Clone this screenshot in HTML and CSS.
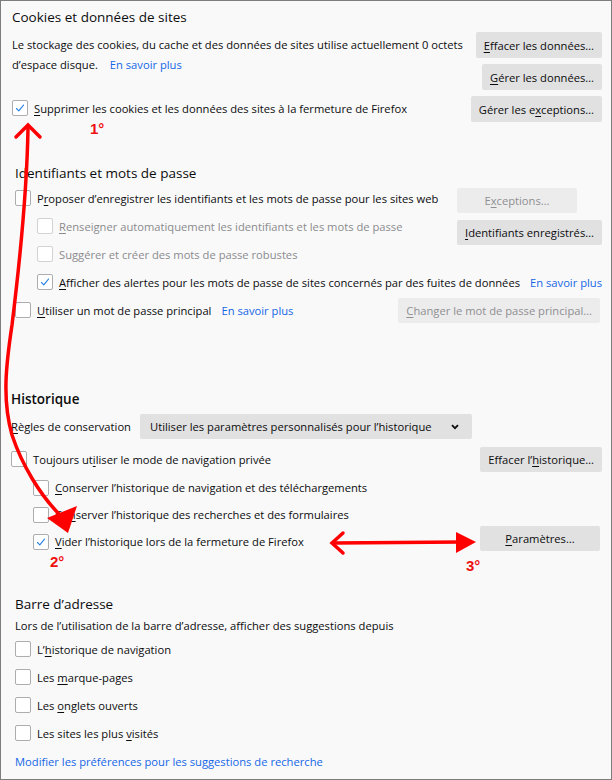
FILE: index.html
```html
<!DOCTYPE html>
<html lang="fr">
<head>
<meta charset="utf-8">
<title>Vie privée et sécurité</title>
<link rel="stylesheet" href="styles.css">
</head>
<body>
<div class="frame">

  <section class="sec sec-cookies">
    <h2 class="h">Cookies et données de sites</h2>
    <div class="cookie-body">
      <div class="cookie-left">
        <p class="desc">Le stockage des cookies, du cache et des données de sites utilise actuellement 0 octets<br>d’espace disque. <a class="link link-inline">En savoir plus</a></p>
        <div class="row cookie-check">
          <span class="cb checked"><svg viewBox="0 0 16 16"><path d="M4 8.6 L6.6 11.2 L12 4.6"/></svg></span>
          <span><u>S</u>upprimer les cookies et les données des sites à la fermeture de Firefox</span>
        </div>
      </div>
      <div class="btn-col end">
        <button class="btn"><u>E</u>ffacer les données…</button>
        <button class="btn"><u>G</u>érer les données…</button>
        <button class="btn">Gérer les e<u>x</u>ceptions…</button>
      </div>
    </div>
  </section>

  <section class="sec sec-logins">
    <h2 class="h">Identifiants et mots de passe</h2>
    <div class="logins-grid">
      <div class="row r1"><span class="cb"></span><span>P<u>r</u>oposer d’enregistrer les identifiants et les mots de passe pour les sites web</span></div>
      <div class="row r2 sub disabled"><span class="cb"></span><span><u>R</u>enseigner automatiquement les identifiants et les mots de passe</span></div>
      <div class="row r3 sub disabled"><span class="cb"></span><span>Su<u>g</u>gérer et créer des mots de passe robustes</span></div>
      <div class="row r4 sub"><span class="cb checked"><svg viewBox="0 0 16 16"><path d="M4 8.6 L6.6 11.2 L12 4.6"/></svg></span><span><u>A</u>fficher des alertes pour les mots de passe de sites concernés par des fuites de données</span><a class="link link-gap">En savoir plus</a></div>
      <div class="login-btns">
        <button class="btn btn-sm" disabled>E<u>x</u>ceptions…</button>
        <button class="btn btn-sm"><u>I</u>dentifiants enregistrés…</button>
      </div>
    </div>
    <div class="row r5 spread">
      <div class="row-left"><span class="cb"></span><span><u>U</u>tiliser un mot de passe principal</span><a class="link link-gap">En savoir plus</a></div>
      <button class="btn btn-sm" disabled><u>C</u>hanger le mot de passe principal…</button>
    </div>
  </section>

  <section class="sec sec-history">
    <h2 class="h h-bold">Historique</h2>
    <div class="row rules">
      <span><u>R</u>ègles de conservation</span>
      <div class="select">
        <span>Utiliser les paramètres personnalisés pour l’historique</span>
        <svg class="chev" viewBox="0 0 8 6"><path d="M1 1.2 L4 4.2 L7 1.2"/></svg>
      </div>
    </div>
    <div class="row spread private">
      <div class="row-left"><span class="cb"></span><span>Toujours ut<u>i</u>liser le mode de navigation privée</span></div>
      <button class="btn btn-sm">Effacer l’<u>h</u>istorique…</button>
    </div>
    <div class="row hsub sub"><span class="cb"></span><span><u>C</u>onserver l’historique de navigation et des téléchargements</span></div>
    <div class="row hsub sub"><span class="cb"></span><span>Co<u>n</u>server l’historique des recherches et des formulaires</span></div>
    <div class="row hsub sub spread clear-row">
      <div class="row-left"><span class="cb checked"><svg viewBox="0 0 16 16"><path d="M4 8.6 L6.6 11.2 L12 4.6"/></svg></span><span><u>V</u>ider l’historique lors de la fermeture de Firefox</span></div>
      <button class="btn btn-sm btn-params"><u>P</u>aramètres…</button>
    </div>
  </section>

  <section class="sec sec-urlbar">
    <h2 class="h">Barre d’adresse</h2>
    <p class="desc2">Lors de l’utilisation de la barre d’adresse, afficher des suggestions depuis</p>
    <div class="row ub"><span class="cb"></span><span>L’<u>h</u>istorique de navigation</span></div>
    <div class="row ub"><span class="cb"></span><span>Les <u>m</u>arque-pages</span></div>
    <div class="row ub"><span class="cb"></span><span>Les <u>o</u>nglets ouverts</span></div>
    <div class="row ub"><span class="cb"></span><span>Les sites les plus <u>v</u>isités</span></div>
    <a class="link link-block">Modifier les préférences pour les suggestions de recherche</a>
  </section>

  <svg class="annot" viewBox="0 0 612 780" width="612" height="780">
    <path class="ln" d="M28,128 C27,190 20,260 12,325 C6,365 2,400 12,435 C22,465 40,495 60,515"/>
    <path class="ln" d="M16,137 L28,125 L40,137"/>
    <polygon class="fill" points="47,518 77,506 68,533"/>
    <path class="ln" d="M334,543 L462,542"/>
    <path class="ln" d="M343,533 L332,543 L343,553"/>
    <polygon class="fill" points="456,532 456,553 476,542"/>
  </svg>
  <span class="mark m1">1°</span>
  <span class="mark m2">2°</span>
  <span class="mark m3">3°</span>
</div>
</body>
</html>
```
FILE: styles.css
```css
* { box-sizing: border-box; }

body {
  margin: 0;
  background: #ffffff;
  font-family: "Open Sans", "Noto Sans", sans-serif;
  font-size: 11.2px;
  color: #0c0c0d;
}

.frame {
  position: relative;
  width: 612px;
  height: 780px;
  border: 1px solid #7d7d7d;
  background: #f9f9fa;
  overflow: hidden;
}

u { text-decoration: underline; text-underline-offset: 2px; }

.h {
  margin: 0;
  font-size: 13.5px;
  font-weight: 400;
  line-height: 20px;
  white-space: nowrap;
}
.h-bold { font-weight: 600; }

.link {
  color: #1467e6;
  text-decoration: none;
  white-space: nowrap;
}
.link-inline { margin-left: 9px; }
.link-gap { margin-left: 10px; }
.link-block { display: block; line-height: 20px; margin-top: 5px; }

.row {
  display: flex;
  align-items: center;
  white-space: nowrap;
}
.row-left { display: flex; align-items: center; }
.spread { justify-content: space-between; }
.sub { padding-left: 22px; }

.cb {
  flex: none;
  width: 16px;
  height: 16px;
  margin-right: 6px;
  border: 1px solid #adadb0;
  border-radius: 2px;
  background: #ffffff;
  display: flex;
  align-items: center;
  justify-content: center;
}
.cb svg { width: 14px; height: 14px; }
.cb path { fill: none; stroke: #2a83e6; stroke-width: 1.3; stroke-linecap: round; stroke-linejoin: round; }

.disabled { color: #8b8b8d; }
.disabled .cb { border-color: #d3d3d6; }

.btn {
  height: 26px;
  min-width: 120px;
  padding: 0 8px;
  border: 0;
  border-radius: 2px;
  background: #e1e1e2;
  font: inherit;
  color: #0c0c0d;
  white-space: nowrap;
}
.btn-sm { height: 25px; }
.btn:disabled { background: #ececed; color: #8f8f91; }

.btn-col { display: flex; flex-direction: column; gap: 6px; }
.btn-col.end { align-items: flex-end; }

/* Section 1 */
.sec-cookies { padding: 6px 9px 0 11px; }
.cookie-body { display: flex; justify-content: space-between; margin-top: 5px; }
.desc { margin: 3px 0 0; line-height: 20px; white-space: nowrap; }
.cookie-check { height: 26px; margin-top: 20px; }

/* Section 2 */
.sec-logins { margin-top: 41px; padding: 0 11px 0 14px; }
.logins-grid {
  display: grid;
  grid-template-columns: 1fr 143px;
  grid-template-rows: repeat(4, 28px);
  margin-top: 1px;
}
.r1 { grid-column: 1; grid-row: 1; }
.r2 { grid-column: 1; grid-row: 2; }
.r3 { grid-column: 1; grid-row: 3; }
.r4 { grid-column: 1 / 3; grid-row: 4; }
.login-btns {
  grid-column: 2;
  grid-row: 1 / 4;
  display: flex;
  flex-direction: column;
  align-items: flex-start;
  gap: 7px;
  padding-top: 4px;
}
.r5 { height: 28px; }

/* Section 3 */
.sec-history { margin-top: 65px; padding: 0 9px 0 10px; }
.rules { height: 25px; margin-top: 5px; gap: 9px; }
.select {
  width: 332px;
  height: 25px;
  border-radius: 2px;
  background: #e1e1e2;
  display: flex;
  align-items: center;
  justify-content: space-between;
  padding: 0 13px 0 10px;
}
.chev { width: 8px; height: 6px; }
.chev path { fill: none; stroke: #0c0c0d; stroke-width: 1.8; }
.private { height: 26px; margin-top: 7px; }
.hsub { height: 27px; }
.private + .hsub { margin-top: 2px; }
.clear-row { align-items: flex-start; }
.clear-row .row-left { height: 27px; }
.btn-params { margin-top: -2px; margin-right: 2px; }

/* Section 4 */
.sec-urlbar { margin-top: 39px; padding: 0 11px 0 14px; }
.desc2 { margin: 2px 0 0; line-height: 19px; white-space: nowrap; }
.ub { height: 28px; }

/* Annotations */
.annot { position: absolute; left: -1px; top: -1px; pointer-events: none; }
.annot .ln { fill: none; stroke: #ff0000; stroke-width: 3.5; stroke-linecap: round; stroke-linejoin: miter; }
.annot .fill { fill: #ff0000; }
.mark {
  position: absolute;
  font-family: "Liberation Sans", Arial, sans-serif;
  font-weight: 700;
  font-size: 15px;
  line-height: 16px;
  color: #ee1111;
}
.m1 { left: 89px; top: 120px; }
.m2 { left: 49px; top: 553px; }
.m3 { left: 465px; top: 557px; }
```
